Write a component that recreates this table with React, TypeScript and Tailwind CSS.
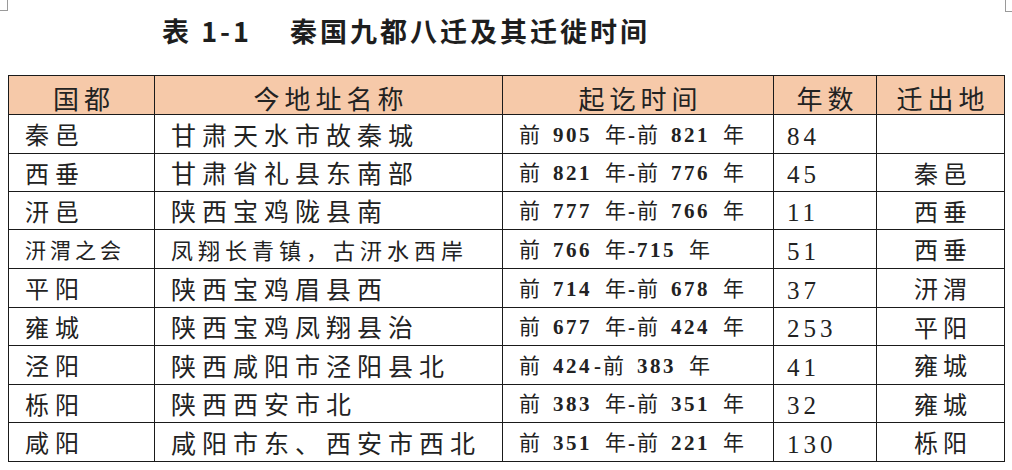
import React from "react";

const rows: [string, string, string, string, string, boolean?][] = [
  ["秦邑", "甘肃天水市故秦城", "前 905 年-前 821 年", "84", ""],
  ["西垂", "甘肃省礼县东南部", "前 821 年-前 776 年", "45", "秦邑"],
  ["汧邑", "陕西宝鸡陇县南", "前 777 年-前 766 年", "11", "西垂"],
  ["汧渭之会", "凤翔长青镇，古汧水西岸", "前 766 年-715 年", "51", "西垂", true],
  ["平阳", "陕西宝鸡眉县西", "前 714 年-前 678 年", "37", "汧渭"],
  ["雍城", "陕西宝鸡凤翔县治", "前 677 年-前 424 年", "253", "平阳"],
  ["泾阳", "陕西咸阳市泾阳县北", "前 424-前 383 年", "41", "雍城"],
  ["栎阳", "陕西西安市北", "前 383 年-前 351 年", "32", "雍城"],
  ["咸阳", "咸阳市东、西安市西北", "前 351 年-前 221 年", "130", "栎阳"],
];

const heights = ["h-[39px]", "h-[38px]", "h-[38px]", "h-[39px]", "h-[39px]", "h-[38px]", "h-[39px]", "h-[38px]", "h-[39px]"];

function TimeText({ s }: { s: string }) {
  const parts = s.split(/(\d+|-| )/).filter((p) => p !== "");
  return (
    <>
      {parts.map((p, i) => {
        if (/^\d+$/.test(p))
          return (
            <span key={i} className="font-bold text-[21px] tracking-[2.5px] [font-family:'Liberation_Serif',serif]">
              {p}
            </span>
          );
        if (p === "-")
          return (
            <span key={i} className="font-bold text-[21px] mx-[2px] [font-family:'Liberation_Serif',serif]">
              -
            </span>
          );
        if (p === " ") return <span key={i} className="inline-block w-[13px]" />;
        return <span key={i}>{p}</span>;
      })}
    </>
  );
}

export default function App() {
  const cjk = "[font-family:'Noto_Sans_CJK_SC',sans-serif]";
  return (
    <div className="relative w-[1012px] h-[470px] bg-white text-[#222] overflow-hidden">
      <div className="absolute left-0 top-0 w-[8px] h-[11px] border-r border-b border-[#9a9a9a]" />
      <div className="absolute right-0 top-0 w-[7px] h-[12px] border-l border-b border-[#9a9a9a]" />
      <div className="h-[75px] pl-[162px] pt-[14px]">
        <div className="font-bold text-[27px] leading-[34px] tracking-[3px] [font-family:'Noto_Sans_CJK_SC',sans-serif] text-[#1e1e1e]">
          表 1-1<span className="inline-block w-[38px]" />秦国九都八迁及其迁徙时间
        </div>
      </div>
      <table className={`ml-[8px] w-[996px] table-fixed border-collapse ${cjk}`}>
        <colgroup>
          <col className="w-[146px]" />
          <col className="w-[348px]" />
          <col className="w-[271px]" />
          <col className="w-[103px]" />
          <col className="w-[128px]" />
        </colgroup>
        <thead>
          <tr className="h-[39px] bg-[#f6c9a9]">
            {["国都", "今地址名称", "起讫时间", "年数", "迁出地"].map((h) => (
              <th
                key={h}
                className="border border-[#1a1a1a] text-center font-normal text-[26px] leading-none tracking-[5px] pt-[6px] pl-[5px]"
              >
                {h}
              </th>
            ))}
          </tr>
        </thead>
        <tbody>
          {rows.map((r, i) => (
            <tr key={i} className={heights[i]}>
              <td
                className={`border border-[#1a1a1a] pl-[16px] leading-none whitespace-nowrap ${
                  r[5] ? "text-[21px] tracking-[4px]" : "text-[24px] tracking-[6px]"
                }`}
              >
                {r[0]}
              </td>
              <td
                className={`border border-[#1a1a1a] pl-[16px] leading-none whitespace-nowrap ${
                  r[5] ? "text-[22px] tracking-[5px]" : "text-[25px] tracking-[6px]"
                }`}
              >
                {r[1]}
              </td>
              <td className="border border-[#1a1a1a] pl-[16px] text-[21px] leading-none whitespace-nowrap">
                <TimeText s={r[2]} />
              </td>
              <td className="border border-[#1a1a1a] pl-[13px] pt-[4px] text-[25px] leading-none tracking-[4px] [font-family:'Liberation_Serif',serif]">
                {r[3]}
              </td>
              <td className="border border-[#1a1a1a] text-center pl-[5px] text-[24px] leading-none tracking-[5px]">
                {r[4]}
              </td>
            </tr>
          ))}
        </tbody>
      </table>
    </div>
  );
}
